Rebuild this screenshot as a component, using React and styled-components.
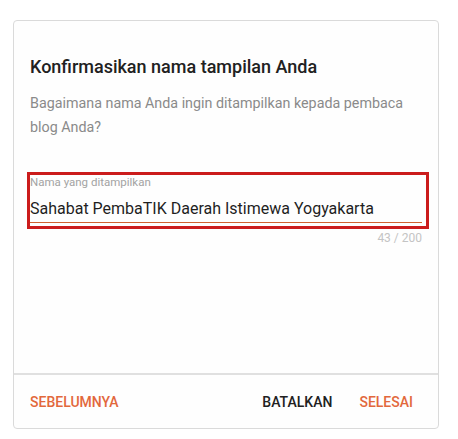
import React from 'react'
import styled, { createGlobalStyle } from 'styled-components'

const GlobalStyle = createGlobalStyle`
    body {
        margin: 0;
        background: #ffffff;
        font-family: Roboto, "Liberation Sans", sans-serif;
    }
`

const Page = styled.div`
    width: 458px;
    height: 439px;
    padding: 20px 0 0 13px;
    box-sizing: border-box;
`

const Card = styled.div`
    width: 426px;
    height: 409px;
    box-sizing: border-box;
    border: 1px solid #dadada;
    border-radius: 4px;
    background: #fefefe;
    display: flex;
    flex-direction: column;
`

const Body = styled.div`
    flex: 1;
    padding: 34px 12px 0 16px;
`

const Title = styled.h2`
    margin: 0;
    font-size: 18px;
    font-weight: 500;
    line-height: 24px;
    color: #212121;
`

const Desc = styled.p`
    margin: 12px 0 0;
    font-size: 14.3px;
    line-height: 24px;
    color: #8a8a8a;
`

const Field = styled.div`
    margin-top: 36px;
    outline: 3px solid #cb1c1c;
    padding: 0 0 3px;
`

const Label = styled.div`
    font-size: 11.5px;
    line-height: 13px;
    color: #a3a3a3;
    padding-top: 1px;
`

const Input = styled.div`
    margin-right: 4px;
    font-size: 16px;
    line-height: 22px;
    padding: 9px 0 2px;
    color: #1f1f1f;
    border-bottom: 1px solid #d0612f;
`

const Counter = styled.div`
    text-align: right;
    margin-right: 4px;
    margin-top: 5px;
    font-size: 12px;
    color: #c4c4c4;
`

const Footer = styled.div`
    height: 53px;
    border-top: 2px solid #e0e0e0;
    display: flex;
    align-items: center;
    padding: 0 25px 0 16px;
`

const Spacer = styled.div`
    flex: 1;
`

const Button = styled.span`
    font-size: 14px;
    font-weight: 500;
    text-transform: uppercase;
    color: ${p => (p.$accent ? '#e2683c' : '#212121')};
    margin-left: ${p => p.$gap || 0}px;
`

export default function App() {
    return (
        <Page>
            <GlobalStyle />
            <Card>
                <Body>
                    <Title>Konfirmasikan nama tampilan Anda</Title>
                    <Desc>Bagaimana nama Anda ingin ditampilkan kepada pembaca blog Anda?</Desc>
                    <Field>
                        <Label>Nama yang ditampilkan</Label>
                        <Input>Sahabat PembaTIK Daerah Istimewa Yogyakarta</Input>
                    </Field>
                    <Counter>43 / 200</Counter>
                </Body>
                <Footer>
                    <Button $accent>Sebelumnya</Button>
                    <Spacer />
                    <Button>Batalkan</Button>
                    <Button $accent $gap={27}>Selesai</Button>
                </Footer>
            </Card>
        </Page>
    )
}
